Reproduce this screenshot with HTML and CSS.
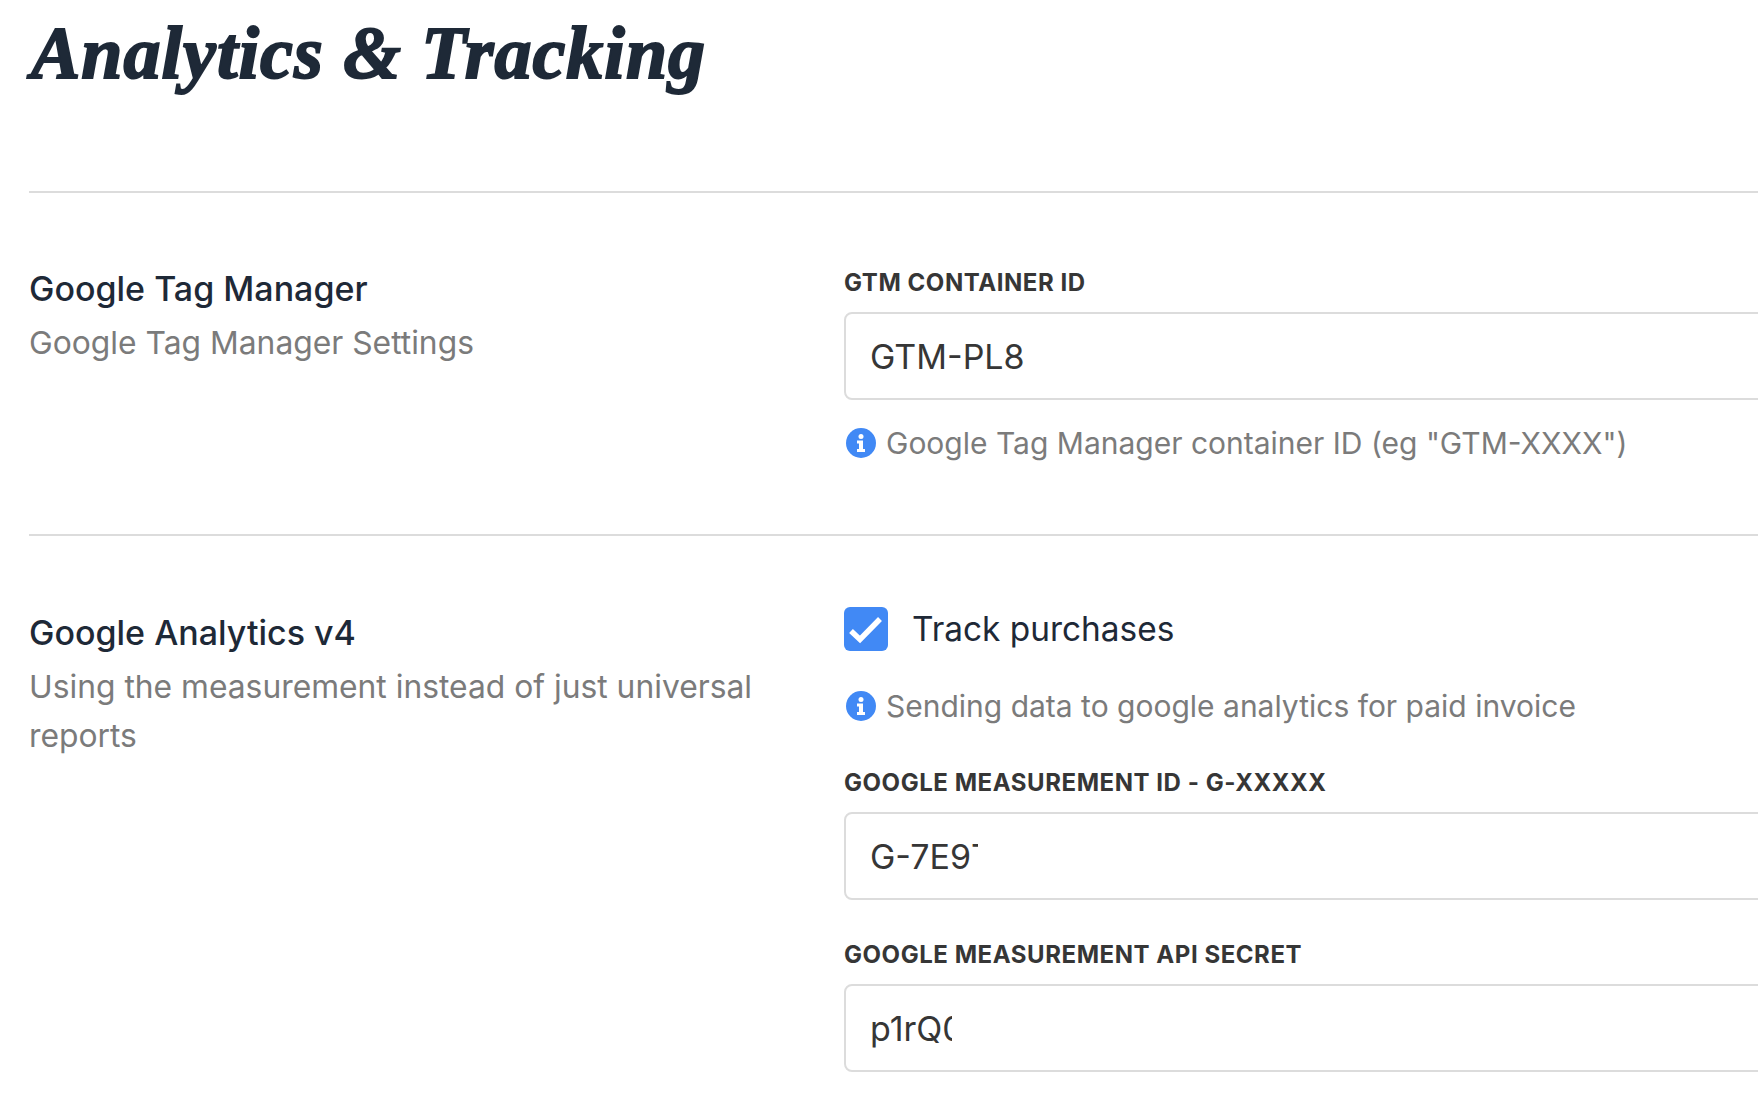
FILE: index.html
```html
<!DOCTYPE html>
<html lang="en">
<head>
  <meta charset="UTF-8" />
  <title>Analytics &amp; Tracking</title>
  <link rel="stylesheet" href="styles.css">
</head>
<body>
  <!-- Page title -->
  <h1 class="page-title">Analytics &amp; Tracking</h1>

  <!-- Google Tag Manager -->
  <section class="settings-row first">
    <div class="row-info">
      <h2>Google Tag Manager</h2>
      <p>Google Tag Manager Settings</p>
    </div>
    <div class="row-fields">
      <label class="field-label">GTM CONTAINER ID</label>
      <div class="text-input"><span class="value">GTM-PL8</span></div>
      <div class="hint">
        <svg class="info-icon" viewBox="0 0 30 30"><circle cx="15" cy="15" r="15" fill="#4189f5"/><circle cx="15" cy="8.6" r="2.5" fill="#fff"/><path d="M11 12.5h6v8.500h2v3h-8v-3h2v-5.500h-2z" fill="#fff"/></svg>
        <span>Google Tag Manager container ID (eg "GTM-XXXX")</span>
      </div>
    </div>
  </section>

  <!-- Google Analytics -->
  <section class="settings-row">
    <div class="row-info">
      <h2>Google Analytics v4</h2>
      <p>Using the measurement instead of just universal reports</p>
    </div>
    <div class="row-fields">
      <div class="check-row">
        <span class="checkbox">
          <svg viewBox="0 0 44 44"><path d="M7 24l9 8.500L36 12" fill="none" stroke="#fff" stroke-width="5.500"/></svg>
        </span>
        <span>Track purchases</span>
      </div>
      <div class="hint hint-check">
        <svg class="info-icon" viewBox="0 0 30 30"><circle cx="15" cy="15" r="15" fill="#4189f5"/><circle cx="15" cy="8.6" r="2.5" fill="#fff"/><path d="M11 12.5h6v8.500h2v3h-8v-3h2v-5.500h-2z" fill="#fff"/></svg>
        <span>Sending data to google analytics for paid invoice</span>
      </div>
      <label class="field-label label-measure">GOOGLE MEASUREMENT ID - G-XXXXX</label>
      <div class="text-input"><span class="value clip-id">G-7E9T</span></div>
      <label class="field-label label-secret">GOOGLE MEASUREMENT API SECRET</label>
      <div class="text-input"><span class="value clip-secret">p1rQ0</span></div>
    </div>
  </section>
</body>
</html>
```

FILE: styles.css
```css
html, body {
  margin: 0;
  padding: 0;
  background-color: #fff;
  height: 100%;
  overflow: hidden;
}

body {
  width: 1900px;
  padding-left: 29px;
  font-family: Inter, "Noto Sans", sans-serif;
  color: #1e2937;
}

/* Title */
.page-title {
  margin: 0;
  height: 191px;
  padding: 13px 0 0 2px;
  box-sizing: border-box;
  font-family: "Liberation Serif", serif;
  font-size: 74px;
  font-style: italic;
  font-weight: 700;
  letter-spacing: 1px;
  line-height: 80px;
  color: #1e2937;
  -webkit-text-stroke: 2px #1e2937;
}

/* Rows */
.settings-row {
  display: grid;
  grid-template-columns: 815px 1000px;
  border-top: 2px solid #dcdcdc;
  padding-top: 67px;
}

.settings-row.first {
  height: 343px;
  box-sizing: border-box;
  padding-top: 66px;
}

.row-info h2 {
  margin: 0;
  font-size: 34px;
  font-weight: 500;
  line-height: 59px;
}

.row-info p {
  margin: 0;
  width: 740px;
  font-size: 31.800px;
  line-height: 49px;
  color: #7b7b7b;
}

.first .row-fields {
  padding-top: 9px;
}

.field-label {
  display: block;
  font-size: 24px;
  font-weight: 700;
  letter-spacing: 0.55px;
  line-height: 30px;
  color: #363636;
}

.text-input {
  box-sizing: border-box;
  height: 88px;
  margin-top: 14px;
  padding-left: 24px;
  border: 2px solid #dcdcdc;
  border-radius: 8px;
  font-size: 34px;
  line-height: 86px;
  color: #363636;
}

.value {
  display: inline-block;
  overflow: hidden;
  white-space: nowrap;
  vertical-align: top;
}

.clip-id {
  width: 108px;
}

.clip-secret {
  width: 82px;
}

.hint {
  display: flex;
  align-items: center;
  gap: 10px;
  margin-top: 24px;
  padding-left: 2px;
  font-size: 30px;
  line-height: 38px;
  color: #7b7b7b;
}

.info-icon {
  width: 30px;
  height: 30px;
  flex: none;
}

/* Checkbox */
.check-row {
  display: flex;
  align-items: center;
  gap: 24px;
  margin-top: 4px;
  font-size: 33.400px;
  line-height: 44px;
}

.checkbox {
  width: 44px;
  height: 44px;
  border-radius: 6px;
  background-color: #4189f5;
}

.checkbox svg {
  display: block;
}

.hint-check {
  margin-top: 36px;
}

.label-measure {
  margin-top: 43px;
}

.label-secret {
  margin-top: 40px;
}
```
